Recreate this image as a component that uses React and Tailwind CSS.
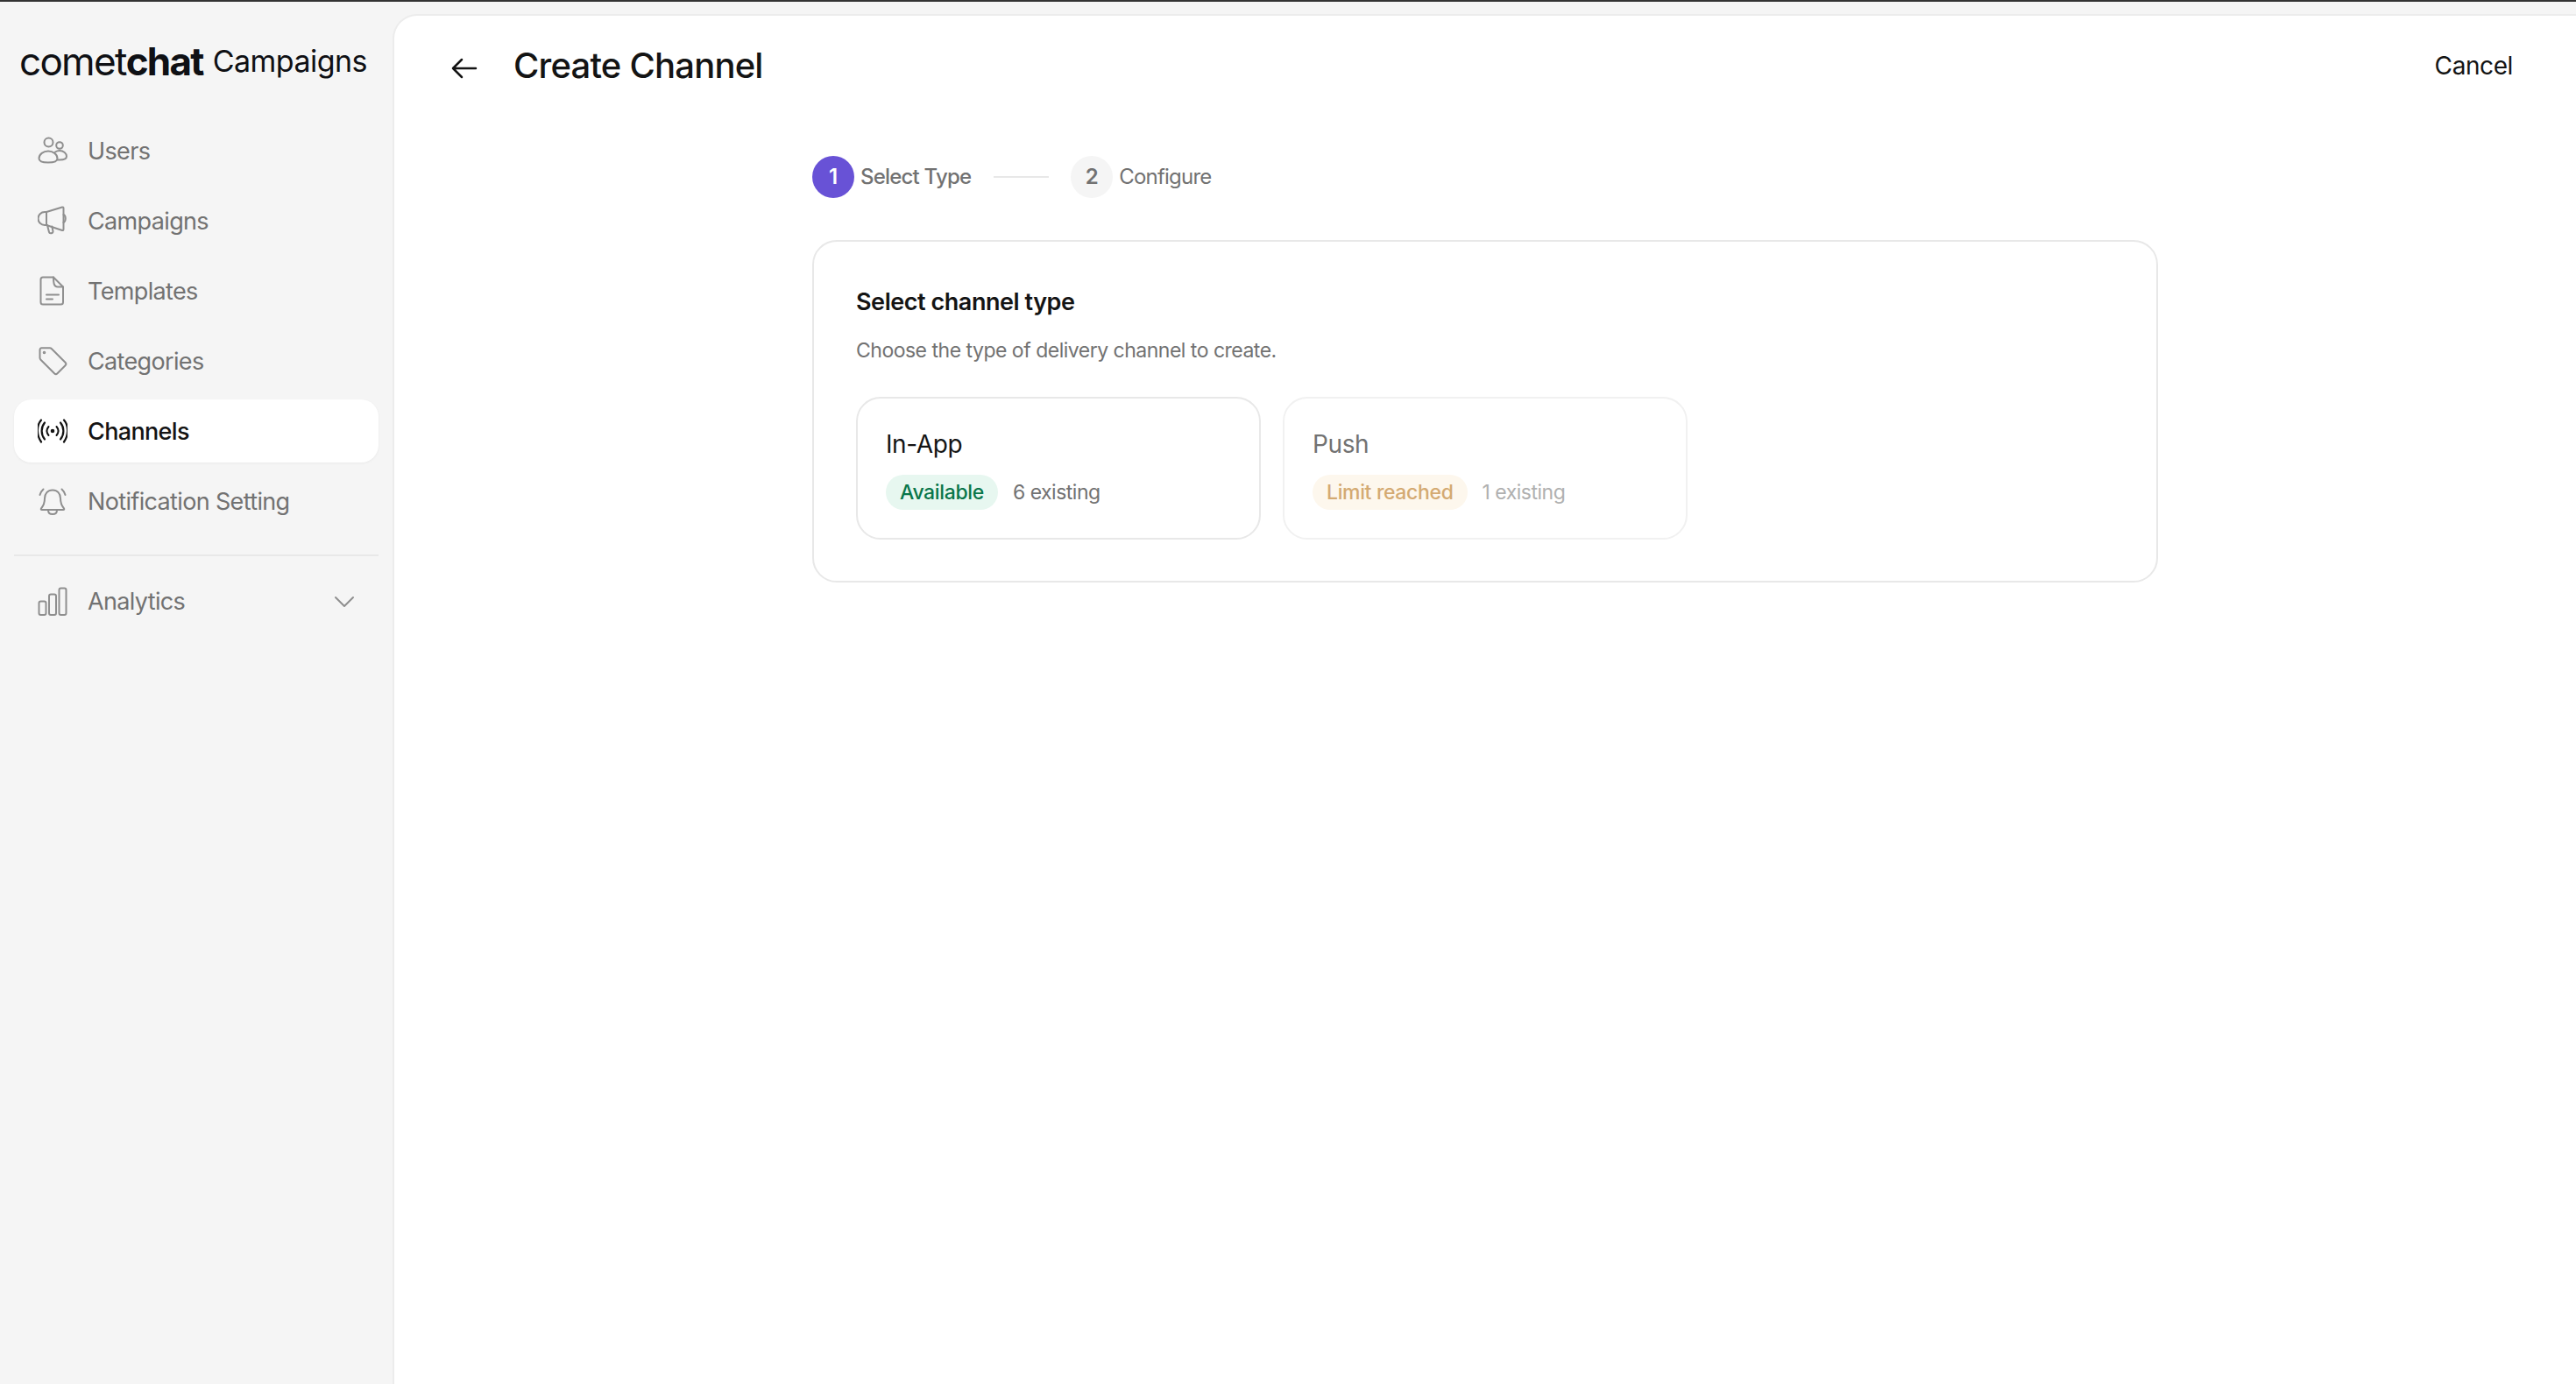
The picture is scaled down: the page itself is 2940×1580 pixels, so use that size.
import React from 'react';

const Icon = ({ children, className = 'text-[#8f8f8f]' }) => (
    <svg viewBox="0 0 34 34" fill="none" stroke="currentColor" strokeWidth="2" strokeLinecap="round" strokeLinejoin="round" className={`w-[34px] h-[34px] shrink-0 ${className}`}>
        {children}
    </svg>
);

const UsersIcon = () => (
    <Icon>
        <circle cx="12.5" cy="7.5" r="5" />
        <circle cx="25" cy="11" r="3.8" />
        <path d="M1.5 26c0-5 5-8.500 10.500-8.500S22.500 21 22.500 26c0 3-4 4.500-10.500 4.500S1.500 29 1.500 26z" />
        <path d="M20 18.500c1.500-1 3.300-1.500 5-1.500 4.500 0 8 3 8 6.500 0 2.500-3 4-8 4-.8 0-1.600 0-2.400-.1" />
    </Icon>
);

const MegaphoneIcon = () => (
    <Icon>
        <path d="M28 1.500 10 7H8a7.500 7.500 0 0 0 0 15h2l18 6c.9.3 1.500-.2 1.500-1.200V2.700c0-1-.6-1.400-1.500-1.200z" />
        <path d="M29.500 10c3 1.500 3 7.500 0 9" />
        <path d="M10 7v15" />
        <path d="m11 22 2 8c.5 2 5 1.500 4.500-1l-1.200-5.500" />
    </Icon>
);

const FileIcon = () => (
    <Icon>
        <path d="M6 1.500h12l11 11v17.500a2.500 2.500 0 0 1-2.500 2.500h-20.500a2.500 2.500 0 0 1-2.500-2.500v-26a2.500 2.500 0 0 1 2.500-2.500z" />
        <path d="M18 1.500c0 5 0 11 5 11h6" />
        <path d="M10 21.500h14M10 26.500h7" />
    </Icon>
);

const TagIcon = () => (
    <Icon>
        <path d="M2.500 4.500v9c0 1 .4 1.600 1 2.200l15.500 15.500c1 1 2.500 1 3.500 0l9-9c1-1 1-2.500 0-3.500l-15.500-15.500c-.7-.7-1.300-1-2.200-1h-9.300c-1.300 0-2 .8-2 2.300z" />
        <circle cx="7.500" cy="7.500" r=".8" />
    </Icon>
);

const BroadcastIcon = () => (
    <Icon className="text-[#141414]">
        <circle cx="17" cy="17" r="1.300" fill="currentColor" />
        <path d="M12.500 12c-2.500 3-2.500 7 0 10M21.500 12c2.500 3 2.500 7 0 10" />
        <path d="M8 7.500c-4.500 5.500-4.500 13.500 0 19M26 7.500c4.500 5.500 4.500 13.500 0 19" strokeWidth="2.200" />
        <path d="M4 4.500c-6 7-5 18 0 25M30 4.500c6 7 5 18 0 25" strokeWidth="2.200" />
    </Icon>
);

const BellIcon = () => (
    <Icon>
        <path d="M17 4.500c-5.500 0-9 4-9 9.500 0 6-1.500 8.500-4 11.500-.6.800-.2 1.500.8 1.500h24.400c1 0 1.400-.7.800-1.500-2.500-3-4-5.500-4-11.500 0-5.500-3.500-9.500-9-9.500z" />
        <path d="M12 27.500c0 3 2.200 4.500 5 4.500s5-1.500 5-4.500" />
        <path d="M2.500 10c.6-2.500 1.800-4.500 4-6.500M31.500 10c-.6-2.500-1.800-4.500-4-6.500" />
    </Icon>
);

const BarsIcon = () => (
    <Icon>
        <rect x="1.500" y="16.500" width="8" height="15.500" rx="2" />
        <rect x="13" y="8.500" width="8" height="23.500" rx="2" />
        <rect x="24.500" y="1.500" width="8" height="30.500" rx="2" />
    </Icon>
);

const navItems = [
    { label: 'Users', icon: UsersIcon },
    { label: 'Campaigns', icon: MegaphoneIcon },
    { label: 'Templates', icon: FileIcon },
    { label: 'Categories', icon: TagIcon },
    { label: 'Channels', icon: BroadcastIcon, active: true },
    { label: 'Notification Setting', icon: BellIcon },
];

const NavItem = ({ label, icon: IconComp, active }) => (
    <div className={`flex items-center gap-[23px] h-[72px] px-[27px] rounded-[20px] text-[27px] tracking-[-0.65px] ${active ? 'bg-white text-[#141414] font-medium shadow-[0_1px_3px_rgba(0,0,0,0.05)]' : 'text-[#727272]'}`}>
        <IconComp />
        <span className="pt-[2px]">{label}</span>
    </div>
);

const ChannelCard = ({ name, badge, existing, disabled }) => (
    <div className={`w-[462px] h-[163px] rounded-[28px] border-2 px-[32px] pt-[32px] ${disabled ? 'border-[#f1f1f1]' : 'border-[#e8e8e8]'}`}>
        <div className={`text-[28px] leading-[40px] tracking-[-0.4px] ${disabled ? 'text-[#727272]' : 'text-[#141414]'}`}>{name}</div>
        <div className="flex items-center gap-[17px] mt-[15px]">
            <span className={`h-[40px] px-[16px] rounded-full flex items-center text-[23px] font-medium tracking-[-0.35px] ${disabled ? 'bg-[#fdf7ed] text-[#d4aa72]' : 'bg-[#e7f7f0] text-[#09764a]'}`}>{badge}</span>
            <span className={`text-[23px] tracking-[-0.5px] ${disabled ? 'text-[#b0b0b0]' : 'text-[#727272]'}`}>{existing}</span>
        </div>
    </div>
);

const App = () => {
    return (
        <div className="flex flex-col h-screen bg-[#f5f5f5] border-t-[2px] border-[#333333] font-['Inter',sans-serif] overflow-hidden">
            <div className="flex flex-1 min-h-0">
                {/* Sidebar */}
                <aside className="w-[448px] shrink-0 px-[16px]">
                    <div className="h-[134px] pl-[6px] pt-[46px] flex items-start gap-[11px] text-[#0f1014] whitespace-nowrap">
                        <span className="text-[44px] leading-[44px] tracking-[-1.7px]">comet<span className="font-bold">chat</span></span>
                        <span className="text-[34px] leading-[44px] tracking-[-0.55px]">Campaigns</span>
                    </div>
                    <nav className="flex flex-col gap-[8px]">
                        {navItems.map((item) => (
                            <NavItem key={item.label} {...item} />
                        ))}
                    </nav>
                    <div className="h-[2px] bg-[#e8e8e8] mt-[25px] mb-[16px]" />
                    <div className="flex items-center gap-[23px] h-[72px] px-[27px] text-[27px] tracking-[-0.65px] text-[#727272]">
                        <BarsIcon />
                        <span className="flex-1">Analytics</span>
                        <svg viewBox="0 0 24 14" fill="none" stroke="#8f8f8f" strokeWidth="2" strokeLinecap="round" strokeLinejoin="round" className="w-[24px] h-[14px]">
                            <path d="M2 2l10 10L22 2" />
                        </svg>
                    </div>
                </aside>

                {/* Main */}
                <main className="flex-1 mt-[14px] bg-white rounded-tl-[28px] border-l-2 border-t-2 border-[#ececec]">
                    <header className="flex items-center justify-between h-[110px] pl-[65px] pr-[72px] pt-[4px]">
                        <div className="flex items-center gap-[41px]">
                            <svg viewBox="0 0 30 24" fill="none" stroke="#141414" strokeWidth="2.500" strokeLinecap="round" strokeLinejoin="round" className="w-[30px] h-[24px] mt-[6px]">
                                <path d="M28 12H2M12 2 2 12l10 10" />
                            </svg>
                            <h1 className="text-[40px] font-medium tracking-[-0.8px] text-[#141414]">Create Channel</h1>
                        </div>
                        <button className="text-[28px] tracking-[-0.4px] text-[#141414]">Cancel</button>
                    </header>

                    <div className="pl-[477px] pt-[50px]">
                        {/* Stepper */}
                        <div className="flex items-center h-[48px]">
                            <span className="w-[48px] h-[48px] rounded-full bg-[#6852d6] text-white text-[24px] font-semibold flex items-center justify-center">1</span>
                            <span className="ml-[7px] text-[24px] font-medium tracking-[-0.8px] text-[#727272]">Select Type</span>
                            <span className="ml-[26px] w-[63px] h-[2px] bg-[#e8e8e8]" />
                            <span className="ml-[25px] w-[48px] h-[48px] rounded-full bg-[#f5f5f5] text-[#727272] text-[24px] font-semibold flex items-center justify-center">2</span>
                            <span className="ml-[7px] text-[24px] tracking-[-0.8px] text-[#727272]">Configure</span>
                        </div>

                        {/* Card */}
                        <section className="w-[1536px] h-[391px] mt-[48px] rounded-[28px] border-2 border-[#e8e8e8] px-[48px] pt-[49px]">
                            <h2 className="text-[27px] leading-[40px] font-semibold tracking-[-0.45px] text-[#141414]">Select channel type</h2>
                            <p className="text-[23px] leading-[32px] mt-[19px] tracking-[-0.5px] text-[#727272]">Choose the type of delivery channel to create.</p>
                            <div className="flex gap-[25px] mt-[37px]">
                                <ChannelCard name="In-App" badge="Available" existing="6 existing" />
                                <ChannelCard name="Push" badge="Limit reached" existing="1 existing" disabled />
                            </div>
                        </section>
                    </div>
                </main>
            </div>
        </div>
    );
};

export default App;
